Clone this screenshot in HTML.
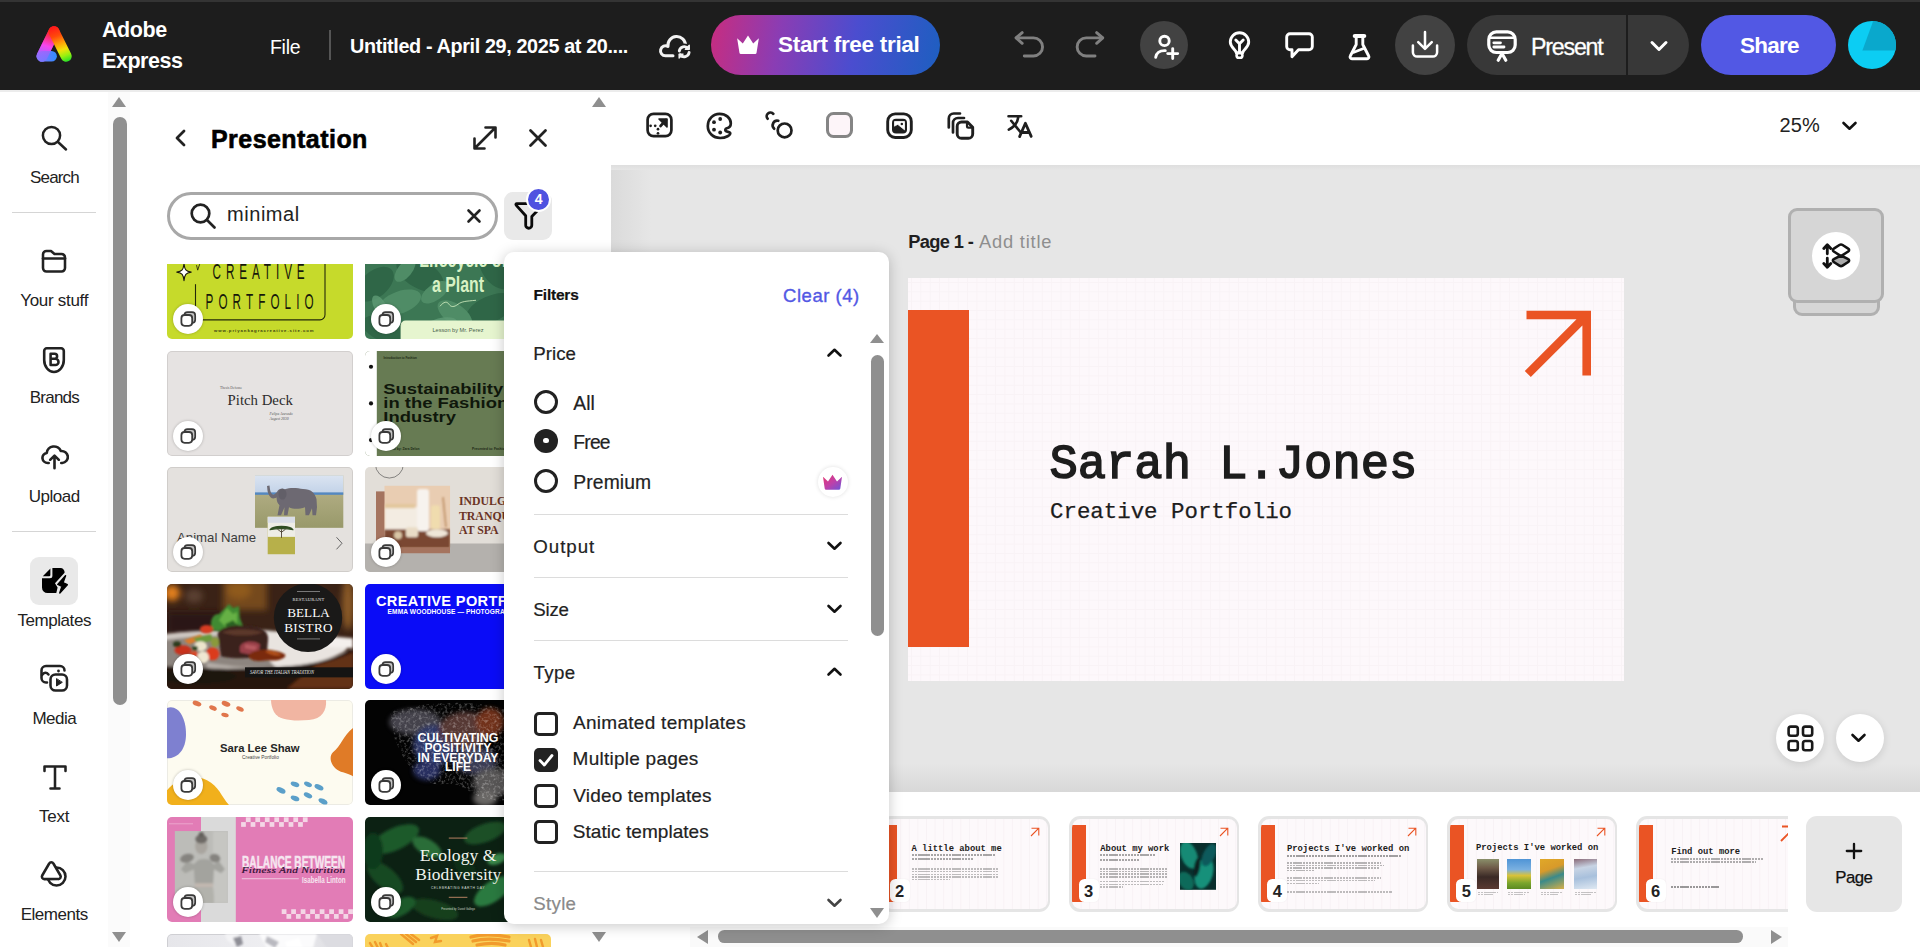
<!DOCTYPE html>
<html><head><meta charset="utf-8">
<style>
*{box-sizing:border-box;margin:0;padding:0}
html,body{width:1920px;height:947px;overflow:hidden;background:#fff;font-family:"Liberation Sans",sans-serif;color:#222}
.abs{position:absolute}
#top{position:absolute;left:0;top:0;width:1920px;height:90px;background:#1d1d1d;border-top:2px solid #343434}
#top .t{position:absolute;color:#fff;white-space:nowrap}
#rail{position:absolute;left:0;top:90px;width:108px;height:857px;background:#fff}
.ri{position:absolute;left:0;width:108px;text-align:center;font-size:16.5px;color:#222}
.ri svg{position:absolute}
.rdiv{position:absolute;left:12px;width:84px;height:1px;background:#d5d5d5}
#panel{position:absolute;left:130px;top:90px;width:481px;height:857px;background:#fff;overflow:hidden}
.tp{position:absolute;border-radius:5px;overflow:hidden}
.dup{position:absolute;left:6px;bottom:5px;width:30px;height:30px;border-radius:50%;background:#fff;box-shadow:0 0 3px rgba(0,0,0,.25)}
#ctool{position:absolute;left:611px;top:90px;width:1309px;height:75px;background:#fff}
#canvas{position:absolute;left:611px;top:165px;width:1309px;height:627px;overflow:hidden;background:#e6e6e6}
#strip{position:absolute;left:611px;top:792px;width:1309px;height:155px;background:#fff}
#pop{position:absolute;left:504px;top:252px;width:385px;height:672px;background:#fff;border-radius:10px;box-shadow:0 2px 14px rgba(0,0,0,.22);overflow:hidden}
#pop .h{position:absolute;left:29px;font-size:19px;color:#222;white-space:nowrap}
#pop .o{position:absolute;left:68px;font-size:19px;color:#222;white-space:nowrap}
#pop .dv{position:absolute;left:29px;width:314px;height:1px;background:#dcdcdc}
.rad{position:absolute;left:29px;width:24px;height:24px;border-radius:50%;border:2.5px solid #222;background:#fff}
.chk{position:absolute;left:29px;width:24px;height:24px;border-radius:5px;border:2.5px solid #222;background:#fff}
.sb{background:#8f8f8f;border-radius:7px;position:absolute}
.tri{position:absolute;width:0;height:0}
</style></head><body>

<!-- TOPBAR -->
<div id="top">
<!-- logo -->
<svg class="abs" style="left:34px;top:20px" width="40" height="42" viewBox="0 0 40 42">
<defs>
<linearGradient id="lgL" gradientUnits="userSpaceOnUse" x1="20" y1="5" x2="8" y2="40"><stop offset="0" stop-color="#ff1a1a"/><stop offset="0.25" stop-color="#ff2a55"/><stop offset="0.55" stop-color="#f646f0"/><stop offset="0.8" stop-color="#a862ff"/><stop offset="1" stop-color="#7a78ff"/></linearGradient>
<linearGradient id="lgR" gradientUnits="userSpaceOnUse" x1="20" y1="5" x2="33" y2="40"><stop offset="0" stop-color="#ff1a1a"/><stop offset="0.25" stop-color="#ff4a0a"/><stop offset="0.45" stop-color="#ff9a08"/><stop offset="0.65" stop-color="#f2e10a"/><stop offset="0.82" stop-color="#9af010"/><stop offset="1" stop-color="#1fe02a"/></linearGradient>
<linearGradient id="lgB" gradientUnits="userSpaceOnUse" x1="4" y1="0" x2="23" y2="0"><stop offset="0" stop-color="#8a74ff"/><stop offset="0.5" stop-color="#5a80ff"/><stop offset="1" stop-color="#2f8cff"/></linearGradient>
</defs>
<path d="M20 9.800 L8 34.200" fill="none" stroke="url(#lgL)" stroke-width="11" stroke-linecap="round"/>
<path d="M8 34.200 L17.600 34.200" fill="none" stroke="url(#lgB)" stroke-width="10.600" stroke-linecap="round"/>
<path d="M20 9.800 L8 34.200" fill="none" stroke="url(#lgL)" stroke-width="11" stroke-linecap="round" opacity="0.55"/>
<path d="M20 9.800 L32.200 34.200" fill="none" stroke="url(#lgR)" stroke-width="11" stroke-linecap="round"/>
</svg>
<div class="t" style="left:102px;top:12.500px;font-size:21.500px;font-weight:700;line-height:31px;letter-spacing:-0.45px">Adobe<br>Express</div>
<div class="t" style="left:270px;top:33.500px;font-size:19.500px;letter-spacing:-0.3px">File</div>
<div class="abs" style="left:329px;top:28px;width:2px;height:30px;background:#555"></div>
<div class="t" style="left:350px;top:32.500px;font-size:19.800px;font-weight:700;letter-spacing:-0.360px">Untitled - April 29, 2025 at 20....</div>
<!-- cloud sync -->
<svg class="abs" style="left:657px;top:28px" width="40" height="34" viewBox="0 0 40 34" fill="none" stroke="#f2f2f2" stroke-width="3" stroke-linecap="round" stroke-linejoin="round">
<path d="M16 25.800 H8.500 A5 5 0 1 1 10.970 16.450 A8.800 8.800 0 1 1 28.500 15.300"/>
<circle cx="27.200" cy="21.700" r="8.300" fill="#1d1d1d" stroke="none"/>
<path d="M22.300 21 A5 5 0 0 1 31.200 18.600" stroke-width="2.900"/><path d="M32.100 22.400 A5 5 0 0 1 23.200 24.800" stroke-width="2.900"/>
<path d="M32.300 15.300 V19.300 H28.300 Z M22.100 28.100 V24.100 H26.100 Z" fill="#f2f2f2" stroke-width="1.300"/>
</svg>
<!-- trial -->
<div class="abs" style="left:711px;top:13px;width:229px;height:60px;border-radius:30px;background:linear-gradient(100deg,#c22e84 3%,#8a3db4 30%,#4b4dcf 62%,#1d5fc0 100%)"></div>
<svg class="abs" style="left:734.500px;top:31.800px" width="26" height="20.800" viewBox="0 0 26 22" fill="#fff"><path d="M1.500 4.500 L7.500 10 L13 1.500 L18.500 10 L24.500 4.500 L22 20 a1.500 1.500 0 0 1-1.500 1.200 H5.500 A1.500 1.500 0 0 1 4 20 Z"/></svg>
<div class="t" style="left:778px;top:30px;font-size:22.5px;font-weight:700;letter-spacing:-0.3px">Start free trial</div>
<!-- undo/redo -->
<svg class="abs" style="left:1014px;top:28px" width="32" height="30" viewBox="0 0 32 30" fill="none" stroke="#808080" stroke-width="2.900" stroke-linecap="round" stroke-linejoin="round"><path d="M8.200 2.600 L2 7.900 L8.200 13.300"/><path d="M2.500 7.900 H19.500 a9.050 9.050 0 0 1 0 18.100 H10.300"/></svg>
<svg class="abs" style="left:1074px;top:28px" width="32" height="30" viewBox="0 0 32 30" fill="none" stroke="#808080" stroke-width="2.900" stroke-linecap="round" stroke-linejoin="round"><path d="M22.600 2.600 L28.800 7.900 L22.600 13.300"/><path d="M28.300 7.900 H12.200 a9.050 9.050 0 0 0 0 18.100 H21"/></svg>
<!-- add user -->
<div class="abs" style="left:1140px;top:19px;width:48px;height:48px;border-radius:50%;background:#424242"></div>
<svg class="abs" style="left:1150px;top:28px" width="30" height="32" viewBox="0 0 30 32" fill="none" stroke="#fff" stroke-width="2.900" stroke-linecap="round" stroke-linejoin="round"><circle cx="14.500" cy="10.900" r="4.700"/><path d="M5.700 27.200 C6.500 22.800 10 20.400 15.300 20.600"/><path d="M22.700 18.600 v10 M17.700 23.600 h10"/></svg>
<!-- bulb -->
<svg class="abs" style="left:1226px;top:28px" width="28" height="32" viewBox="0 0 28 32" fill="none" stroke="#fff" stroke-width="2.900" stroke-linecap="round" stroke-linejoin="round"><path d="M10.300 22.800 C10 19.500 4.300 17.500 4.300 12 a9.200 9.200 0 0 1 18.400 0 C22.700 17.500 17 19.500 16.700 22.800 Z"/><path d="M9.800 10 L13.500 13.800 L17.200 10 M13.500 13.800 V22"/><rect x="10.600" y="23" width="5.800" height="4.700" rx="2.300" stroke-width="2.600"/></svg>
<!-- comment -->
<svg class="abs" style="left:1283px;top:27px" width="34" height="32" viewBox="0 0 34 32" fill="none" stroke="#fff" stroke-width="2.900" stroke-linecap="round" stroke-linejoin="round"><path d="M7 4.800 H26 a3.300 3.300 0 0 1 3.300 3.300 V17.500 a3.300 3.300 0 0 1-3.300 3.300 H15.500 L9 27.800 V20.800 H7 a3.300 3.300 0 0 1-3.300-3.300 V8.100 A3.300 3.300 0 0 1 7 4.800 Z"/></svg>
<!-- flask -->
<svg class="abs" style="left:1346px;top:28px" width="28" height="32" viewBox="0 0 28 32" fill="none" stroke="#fff" stroke-width="2.900" stroke-linecap="round" stroke-linejoin="round"><path d="M8.800 6 H18.200" stroke-width="4.200"/><path d="M10.200 7 V14.500 L4.300 26 a1.800 1.800 0 0 0 1.600 2.700 H21.100 a1.800 1.800 0 0 0 1.600-2.700 L16.800 14.500 V7"/><path d="M7.300 22.500 L17.500 18.500" stroke-width="2.500"/></svg>
<!-- download -->
<div class="abs" style="left:1395px;top:13px;width:60px;height:60px;border-radius:50%;background:#424242"></div>
<svg class="abs" style="left:1409px;top:27px" width="32" height="31" viewBox="0 0 32 32" fill="none" stroke="#fff" stroke-width="2.600" stroke-linecap="round" stroke-linejoin="round"><path d="M16 3 v17 M9 13.500 l7 7 7-7"/><path d="M3.500 17 v7 a4.500 4.500 0 0 0 4.500 4.500 h16 a4.500 4.500 0 0 0 4.500-4.500 v-7"/></svg>
<!-- present -->
<div class="abs" style="left:1467px;top:13px;width:222px;height:60px;border-radius:30px;background:#383838"></div>
<div class="abs" style="left:1626px;top:13px;width:2px;height:60px;background:#1d1d1d"></div>
<svg class="abs" style="left:1485px;top:26px" width="34" height="36" viewBox="0 0 34 36" fill="none" stroke="#fff" stroke-width="3.200" stroke-linecap="round" stroke-linejoin="round"><rect x="3.800" y="3.900" width="26.400" height="20.600" rx="7.500"/><path d="M5 9.800 H29" stroke-width="2.400"/><path d="M8.800 14.800 H15.500 M8.800 19 H19" stroke-width="2.800"/><path d="M13.200 32.200 L17 25.500 L20.800 32.200" stroke-width="3.200"/></svg>
<div class="t" style="left:1531px;top:31.500px;font-size:23.200px;letter-spacing:-1.200px;-webkit-text-stroke:0.300px #fff">Present</div>
<svg class="abs" style="left:1649px;top:37px" width="20" height="14" viewBox="0 0 20 14" fill="none" stroke="#fff" stroke-width="3" stroke-linecap="round" stroke-linejoin="round"><path d="M3 3.500 l7 7 7-7"/></svg>
<!-- share -->
<div class="abs" style="left:1701px;top:13px;width:135px;height:60px;border-radius:30px;background:#5258e4"></div>
<div class="t" style="left:1740px;top:30.800px;font-size:22.500px;font-weight:700;letter-spacing:-0.750px">Share</div>
<!-- avatar -->
<div class="abs" style="left:1848px;top:19px;width:48px;height:48px;border-radius:50%;background:#0ccdf3;overflow:hidden"><svg width="48" height="48" viewBox="0 0 48 48" style="position:absolute;left:0;top:0"><path d="M25.200 0 L14.400 29.600 H48 V0 Z" fill="#0aa8cc"/></svg></div>
</div>

<div class="abs" style="left:0;top:90px;width:1920px;height:1.500px;background:#ececec;z-index:5"></div>
<!-- RAIL -->
<div id="rail">
<div class="abs" style="left:108px;top:0;width:23px;height:857px;background:#fbfbfb"></div>
<div class="ri" style="top:77.7px;font-size:17px;line-height:20px;letter-spacing:-0.86px;padding-left:0.86px">Search</div>
<div class="ri" style="top:200.7px;font-size:17px;line-height:20px;letter-spacing:-0.29px;padding-left:0.29px">Your stuff</div>
<div class="ri" style="top:298.3px;font-size:17px;line-height:20px;letter-spacing:-0.76px;padding-left:0.76px">Brands</div>
<div class="ri" style="top:396.7px;font-size:17px;line-height:20px;letter-spacing:-0.48px;padding-left:0.48px">Upload</div>
<div class="ri" style="top:521.0px;font-size:17px;line-height:20px;letter-spacing:-0.44px;padding-left:0.44px">Templates</div>
<div class="ri" style="top:618.7px;font-size:17px;line-height:20px;letter-spacing:-0.52px;padding-left:0.52px">Media</div>
<div class="ri" style="top:716.7px;font-size:17px;line-height:20px;letter-spacing:-0.24px;padding-left:0.24px">Text</div>
<div class="ri" style="top:814.7px;font-size:17px;line-height:20px;letter-spacing:-0.46px;padding-left:0.46px">Elements</div>
<div class="rdiv" style="top:122px"></div><div class="rdiv" style="top:441px"></div>
<svg class="abs" style="left:40px;top:34px" width="28" height="28" viewBox="0 0 28 28" fill="none" stroke="#222" stroke-width="2.550" stroke-linecap="round" stroke-linejoin="round"><circle cx="11.500" cy="11.500" r="8.600" stroke-width="2.500"/><path d="M18 18 L26 25.500" stroke-width="2.500"/></svg>
<svg class="abs" style="left:40px;top:158px" width="28" height="26" viewBox="0 0 28 26" fill="none" stroke="#222" stroke-width="2.550" stroke-linecap="round" stroke-linejoin="round"><path d="M3 10 V6.500 a3.500 3.500 0 0 1 3.500-3.500 h4.500 l3.500 3 h7 a3.500 3.500 0 0 1 3.500 3.500 V20 a3.500 3.500 0 0 1-3.500 3.500 h-15 A3.500 3.500 0 0 1 3 20 Z"/><path d="M3 10.500 h22"/></svg>
<svg class="abs" style="left:41px;top:255px" width="26" height="30" viewBox="0 0 26 30" fill="none" stroke="#222" stroke-width="2.600" stroke-linecap="round" stroke-linejoin="round"><path d="M5.800 3.300 H20.200 a2.600 2.600 0 0 1 2.600 2.600 V15 a9.800 12 0 0 1-19.600 0 V5.900 a2.600 2.600 0 0 1 2.600-2.600 Z"/><path d="M9.600 8.800 V20 H14.400 a3.100 3.100 0 0 0 0-6.200 H9.600 M9.600 13.800 H13.600 a2.500 2.500 0 0 0 0-5 H9.600" stroke-width="2.550"/></svg>
<svg class="abs" style="left:40px;top:354px" width="29" height="26" preserveAspectRatio="none" viewBox="0 0 30 28" fill="none" stroke="#222" stroke-width="2.700" stroke-linecap="round" stroke-linejoin="round"><path d="M9 20.500 H8 a5.500 5.500 0 0 1-1-10.900 A7.500 7.500 0 0 1 21.500 7.500 a6.500 6.500 0 0 1 1.500 13 h-1"/><path d="M15 26 V13 M10.500 17 l4.500-4.500 4.500 4.500"/></svg>
<svg class="abs" style="left:30px;top:467px" width="48" height="48" viewBox="0 0 48 48"><rect width="48" height="48" rx="9" fill="#e9e9e9"/>
<path d="M12.800 19.300 L20.400 11.400 V18 a1.300 1.300 0 0 1-1.300 1.300 Z" fill="#000"/>
<path d="M22.400 11.100 H30.500 a4.200 4.200 0 0 1 4.100 4.600 L25 26.300 L27.600 30.600 L26.300 36.100 H17.500 A5.500 5.500 0 0 1 12 30.600 V21.300 H19.900 A2.500 2.500 0 0 0 22.400 18.800 Z" fill="#000"/>
<path d="M35.500 18.800 L27.800 27.400 L32 29.200 L29.800 36 L37.300 27.700 L33 25.800 Z" fill="#000" stroke="#000" stroke-width="1.500" stroke-linejoin="round"/>
</svg>
<svg class="abs" style="left:39px;top:573px" width="30" height="30" viewBox="0 0 30 30" fill="none" stroke="#222" stroke-width="2.550" stroke-linecap="round" stroke-linejoin="round"><path d="M8 19.500 H7 a4.500 4.500 0 0 1-4.500-4.500 V7.500 A4.500 4.500 0 0 1 7 3 h14 a4.500 4.500 0 0 1 4.500 4.500"/><path d="M3 12 c2-3 4.500-3 6.500-0.500"/><circle cx="19.500" cy="8" r="1.400" fill="#222" stroke="none"/><rect x="11.500" y="11.500" width="16.500" height="16" rx="5"/><path d="M17.500 16 v7 l5.500-3.500 Z" fill="#222" stroke-width="1"/></svg>
<svg class="abs" style="left:42px;top:674px" width="26" height="27" viewBox="0 0 26 27" fill="none" stroke="#222" stroke-width="2.550" stroke-linecap="round" stroke-linejoin="round"><path d="M2.500 7 V2.500 h21 V7 M13 2.500 v22 M8.500 24.500 h9"/></svg>
<svg class="abs" style="left:39px;top:769px" width="30" height="30" viewBox="0 0 30 30" fill="none" stroke="#222" stroke-width="2.550" stroke-linecap="round" stroke-linejoin="round"><circle cx="17.500" cy="17.500" r="9"/><path d="M10.200 4.500 a2.400 2.400 0 0 1 4.200 0 l7 12 a2.400 2.400 0 0 1-2.100 3.600 H5.300 a2.400 2.400 0 0 1-2.100-3.600 Z" fill="#fff"/></svg>
<div class="tri" style="left:112px;top:7px;border-left:7.500px solid transparent;border-right:7.500px solid transparent;border-bottom:10px solid #8f8f8f"></div>
<div class="sb" style="left:113px;top:27px;width:13.500px;height:588px"></div>
<div class="tri" style="left:112px;top:842px;border-left:7.500px solid transparent;border-right:7.500px solid transparent;border-top:10px solid #8f8f8f"></div>
</div>

<!-- PANEL -->
<div id="panel">
<svg class="abs" style="left:43px;top:38px" width="14" height="20" viewBox="0 0 14 20" fill="none" stroke="#222" stroke-width="2.800" stroke-linecap="round" stroke-linejoin="round"><path d="M11 3 L4 10 L11 17"/></svg>
<div class="abs" style="left:81px;top:33.500px;font-size:25px;font-weight:700;letter-spacing:0.45px;color:#000;-webkit-text-stroke:0.600px #000;white-space:nowrap;line-height:30px">Presentation</div>
<svg class="abs" style="left:341px;top:34px" width="28" height="28" viewBox="0 0 28 28" fill="none" stroke="#222" stroke-width="2.600" stroke-linecap="round" stroke-linejoin="round"><path d="M4 24 L24 4 M14.500 3.500 H24.500 V13.500 M3.500 14.500 V24.500 H13.500"/></svg>
<svg class="abs" style="left:398px;top:38px" width="20" height="20" viewBox="0 0 20 20" fill="none" stroke="#222" stroke-width="2.800" stroke-linecap="round"><path d="M2.500 2.500 L17.500 17.500 M17.500 2.500 L2.500 17.500"/></svg>
<div class="abs" style="left:37px;top:102px;width:331px;height:48px;border-radius:24px;border:3px solid #a8a8a8;background:#fff"></div>
<svg class="abs" style="left:59px;top:112px" width="28" height="28" viewBox="0 0 28 28" fill="none" stroke="#222" stroke-width="2.700" stroke-linecap="round"><circle cx="11.500" cy="11.500" r="8.800"/><path d="M18 18 L25.500 25.500"/></svg>
<div class="abs" style="left:97px;top:112px;font-size:20px;line-height:24px;letter-spacing:0.550px;color:#222">minimal</div>
<svg class="abs" style="left:336px;top:118px" width="16" height="16" viewBox="0 0 16 16" fill="none" stroke="#222" stroke-width="2.600" stroke-linecap="round"><path d="M2.500 2.500 L13.500 13.500 M13.500 2.500 L2.500 13.500"/></svg>
<div class="abs" style="left:374px;top:102px;width:48px;height:48px;border-radius:9px;background:#e9e9e9"></div>
<svg class="abs" style="left:383px;top:110px" width="30" height="32" viewBox="0 0 30 32" fill="none" stroke="#0a0a0a" stroke-width="2.800" stroke-linecap="round" stroke-linejoin="round"><path d="M24 3.600 H3.800 a0.900 0.900 0 0 0-0.700 1.500 L12.700 15.800 V25.200 a3.050 3.050 0 0 0 6.100 0 V16.400 L27 8"/></svg>
<div class="abs" style="left:396px;top:97px;width:25.400px;height:25.400px;border-radius:50%;background:#4f52e0;border:2.200px solid #fff;color:#fff;font-size:14px;font-weight:700;text-align:center;line-height:21px">4</div>
<!--TPL_START--><div class="abs" style="left:0;top:174px;width:480px;height:683px;overflow:hidden"><div class="tp" style="left:37px;top:-30px;width:186px;height:105px;"><svg width="186" height="105" preserveAspectRatio="none" viewBox="0 0 186 104.6" style="position:absolute;left:0;top:0;display:block"><rect width="186" height="104.600" fill="#c6da2b"/>
<rect x="28.500" y="12" width="129.500" height="73.500" rx="5" fill="none" stroke="#23280a" stroke-width="1.100"/>
<rect x="10" y="28" width="24" height="22" fill="#c6da2b"/>
<path d="M17 29.500 C17.700 35.800 18.800 37.200 24.200 38 C18.800 38.800 17.700 40.200 17 46.500 C16.300 40.200 15.200 38.800 9.800 38 C15.200 37.200 16.300 35.800 17 29.500 Z" fill="#fff" stroke="#1a1a0a" stroke-width="1.100" stroke-linejoin="round"/>
<path d="M29.500 31 l1.200 5 l2-6" fill="none" stroke="#1a1a0a" stroke-width="0.800"/>
<g transform="translate(45.500,44.500) scale(0.520,1)"><text x="0" y="0" font-size="22.500" letter-spacing="9.500" fill="#16180a" font-family="Liberation Sans, sans-serif">CREATIVE</text></g>
<g transform="translate(38.500,74.700) scale(0.520,1)"><text x="0" y="0" font-size="22.500" letter-spacing="9.800" fill="#16180a" font-family="Liberation Sans, sans-serif">PORTFOLIO</text></g>
<text x="47" y="97.800" font-size="4.300" font-weight="700" letter-spacing="0.950" fill="#3a4010" font-family="Liberation Sans, sans-serif">www.priyankagracreative.site.com</text></svg><div class="dup"><svg width="30" height="30" viewBox="0 0 30 30" style="position:absolute;left:0;top:0"><rect x="11.400" y="8.200" width="10.800" height="10.800" rx="3.200" fill="#c4c4c4" stroke="#3a3a3a" stroke-width="1.700"/><rect x="8.400" y="11" width="10.800" height="10.800" rx="3.200" fill="#fff" stroke="#3a3a3a" stroke-width="1.800"/></svg></div></div>
<div class="tp" style="left:235px;top:-30px;width:186px;height:105px;"><svg width="186" height="105" preserveAspectRatio="none" viewBox="0 0 186 104.6" style="position:absolute;left:0;top:0;display:block"><defs><radialGradient id="lf1" cx="0.3" cy="0.3"><stop offset="0" stop-color="#5b9a70"/><stop offset="1" stop-color="#3a7352"/></radialGradient></defs>
<rect width="186" height="104.600" fill="#3c7754"/>
<g fill="#2f6647"><ellipse cx="10" cy="50" rx="22" ry="13" transform="rotate(-40 10 50)"/><ellipse cx="55" cy="40" rx="26" ry="14" transform="rotate(30 55 40)"/><ellipse cx="125" cy="75" rx="26" ry="13" transform="rotate(-25 125 75)"/><ellipse cx="20" cy="95" rx="24" ry="12" transform="rotate(20 20 95)"/><ellipse cx="130" cy="38" rx="20" ry="11" transform="rotate(50 130 38)"/></g>
<g fill="#4f8c66"><ellipse cx="35" cy="68" rx="22" ry="11" transform="rotate(-20 35 68)"/><ellipse cx="90" cy="80" rx="20" ry="10" transform="rotate(35 90 80)"/><ellipse cx="40" cy="36" rx="14" ry="7" transform="rotate(-50 40 36)"/><ellipse cx="70" cy="58" rx="16" ry="8" transform="rotate(-35 70 58)"/></g>
<g fill="#5f9c76" opacity="0.800"><ellipse cx="75" cy="92" rx="18" ry="8" transform="rotate(-15 75 92)"/><ellipse cx="15" cy="72" rx="12" ry="6" transform="rotate(60 15 72)"/></g>
<g transform="translate(93,57.400) scale(0.740,1)"><text x="0" y="0" text-anchor="middle" font-size="21.500" font-weight="700" fill="#d8f2c4" font-family="Liberation Sans, sans-serif">a Plant</text></g>
<g transform="translate(98,33.200) scale(0.740,1)"><text x="0" y="0" text-anchor="middle" font-size="21.500" font-weight="700" fill="#d8f2c4" font-family="Liberation Sans, sans-serif">Lifecycle of</text></g>
<path d="M75 72 c4-5 7-5 9-2 s5 3 9 0 s8-3 18-4" fill="none" stroke="#d8f2c4" stroke-width="0.800"/>
<path d="M35.600 104.600 V91.200 a5 5 0 0 1 5-5 H186 V104.600 Z" fill="#e6f5cf"/>
<text x="93" y="97.500" text-anchor="middle" font-size="5.600" fill="#46604a" font-family="Liberation Sans, sans-serif">Lesson by Mr. Perez</text></svg><div class="dup"><svg width="30" height="30" viewBox="0 0 30 30" style="position:absolute;left:0;top:0"><rect x="11.400" y="8.200" width="10.800" height="10.800" rx="3.200" fill="#c4c4c4" stroke="#3a3a3a" stroke-width="1.700"/><rect x="8.400" y="11" width="10.800" height="10.800" rx="3.200" fill="#fff" stroke="#3a3a3a" stroke-width="1.800"/></svg></div></div>
<div class="tp" style="left:37px;top:87px;width:186px;height:105px;"><svg width="186" height="105" preserveAspectRatio="none" viewBox="0 0 186 104.6" style="position:absolute;left:0;top:0;display:block"><rect width="186" height="104.600" fill="#e6e3e2"/><rect x="0.500" y="0.500" width="185" height="103.600" rx="4.500" fill="none" stroke="#d2cfce"/>
<text x="60.600" y="53.800" font-size="14.800" fill="#2c2c2c" font-family="Liberation Serif, serif">Pitch Deck</text>
<text x="53" y="37.500" font-size="3.600" fill="#555" font-family="Liberation Serif, serif">Thesis Defense</text>
<text x="102.500" y="63.500" font-size="3.800" font-style="italic" fill="#555" font-family="Liberation Serif, serif">Felipe Azevedo</text>
<text x="102.500" y="68.600" font-size="3.800" font-style="italic" fill="#555" font-family="Liberation Serif, serif">August 2030</text></svg><div class="dup"><svg width="30" height="30" viewBox="0 0 30 30" style="position:absolute;left:0;top:0"><rect x="11.400" y="8.200" width="10.800" height="10.800" rx="3.200" fill="#c4c4c4" stroke="#3a3a3a" stroke-width="1.700"/><rect x="8.400" y="11" width="10.800" height="10.800" rx="3.200" fill="#fff" stroke="#3a3a3a" stroke-width="1.800"/></svg></div></div>
<div class="tp" style="left:235px;top:87px;width:186px;height:105px;border-radius:5px 0 0 5px;"><svg width="186" height="105" preserveAspectRatio="none" viewBox="0 0 186 104.6" style="position:absolute;left:0;top:0;display:block"><rect width="186" height="104.600" fill="#677b53"/><rect width="11.800" height="104.600" fill="#fff"/>
<circle cx="6" cy="15.700" r="2.100" fill="#111"/><circle cx="6" cy="52.200" r="2.100" fill="#111"/><circle cx="6" cy="88.700" r="2.100" fill="#111"/>
<text x="18.500" y="8" font-size="3" font-weight="700" fill="#1d2a16" font-family="Liberation Sans, sans-serif">Introduction to Fashion</text>
<g transform="translate(18.300,42.800) scale(1.290,1)" font-size="14.300" font-weight="700" fill="#0f170b" font-family="Liberation Sans, sans-serif"><text x="0" y="0">Sustainability</text><text x="0" y="14.300">in the Fashion</text><text x="0" y="28.100">Industry</text></g>
<text x="18.500" y="98.800" font-size="3.300" font-weight="700" fill="#1d2a16" font-family="Liberation Sans, sans-serif">Created by: Zara Delon</text>
<text x="107" y="98.800" font-size="3.300" font-weight="700" fill="#1d2a16" font-family="Liberation Sans, sans-serif">Presented to: Fashion</text></svg><div class="dup"><svg width="30" height="30" viewBox="0 0 30 30" style="position:absolute;left:0;top:0"><rect x="11.400" y="8.200" width="10.800" height="10.800" rx="3.200" fill="#c4c4c4" stroke="#3a3a3a" stroke-width="1.700"/><rect x="8.400" y="11" width="10.800" height="10.800" rx="3.200" fill="#fff" stroke="#3a3a3a" stroke-width="1.800"/></svg></div></div>
<div class="tp" style="left:37px;top:203px;width:186px;height:105px;"><svg width="186" height="105" preserveAspectRatio="none" viewBox="0 0 186 104.6" style="position:absolute;left:0;top:0;display:block"><defs><filter id="b1"><feGaussianBlur stdDeviation="0.450"/></filter><linearGradient id="sky" x1="0" y1="0" x2="0" y2="1"><stop offset="0" stop-color="#dbe4f1"/><stop offset="1" stop-color="#c3d3e8"/></linearGradient><linearGradient id="fld" x1="0" y1="0" x2="0" y2="1"><stop offset="0" stop-color="#bdb890"/><stop offset="0.500" stop-color="#aaa77c"/><stop offset="1" stop-color="#98996a"/></linearGradient></defs>
<rect width="186" height="104.600" fill="#e4e1de"/><rect x="0.500" y="0.500" width="185" height="103.600" rx="4.500" fill="none" stroke="#d0cdca"/>
<rect x="88" y="8.300" width="88.300" height="52.300" fill="url(#fld)"/>
<rect x="88" y="8.300" width="88.300" height="17.500" fill="url(#sky)"/><rect x="88" y="25.300" width="88.300" height="2.400" fill="#5388c2"/>
<g fill="#6d6972" filter="url(#b1)"><path d="M112 26 C116 20 128 20 136 22 C144 22 148 26 149.500 32 L150 40 L149 48 L145.500 48 L145 41 L142 48 L138.500 48 L138 40 C132 42 126 42 122 40 L120.500 48 L117 48 L117.500 40 L114 48 L110.500 48 L112.500 38 C110 36 109 32 110 29 Z"/><path d="M110.500 30 C106 33 103 31 101.500 27 C100 24 100.500 21 100 19 L102.500 18.500 C103 22 103 25 105 27 C106.500 28.500 108 27 110 25 C111 21.500 115 20.500 118 23 L116 33 Z"/><ellipse cx="115.500" cy="27" rx="4" ry="5.500" fill="#625e68"/></g>
<rect x="100.700" y="49.600" width="27.300" height="37.300" fill="#b7b04a"/><rect x="100.700" y="49.600" width="27.300" height="20" fill="#eeede6"/><rect x="100.700" y="49.600" width="27.300" height="6" fill="#d9dde6"/>
<path d="M103 62.500 C106 58 123 58 126 62.500 C120 61 109 61 103 62.500 Z" fill="#2f4d22" stroke="#2f4d22" stroke-width="1.200" stroke-linejoin="round"/><path d="M114.500 62 v8.500 M114.500 65 l-4-3 M114.500 65 l4-3" stroke="#3a3020" stroke-width="0.800" fill="none"/>
<text x="10" y="75" font-size="13.200" fill="#3c3c3c" font-family="Liberation Sans, sans-serif">Animal Name</text>
<path d="M169.500 70 l5.500 6 l-5.500 6" fill="none" stroke="#555" stroke-width="0.900"/></svg><div class="dup"><svg width="30" height="30" viewBox="0 0 30 30" style="position:absolute;left:0;top:0"><rect x="11.400" y="8.200" width="10.800" height="10.800" rx="3.200" fill="#c4c4c4" stroke="#3a3a3a" stroke-width="1.700"/><rect x="8.400" y="11" width="10.800" height="10.800" rx="3.200" fill="#fff" stroke="#3a3a3a" stroke-width="1.800"/></svg></div></div>
<div class="tp" style="left:235px;top:203px;width:186px;height:105px;border-radius:5px 0 0 5px;"><svg width="186" height="105" preserveAspectRatio="none" viewBox="0 0 186 104.6" style="position:absolute;left:0;top:0;display:block"><defs><filter id="b2"><feGaussianBlur stdDeviation="1.200"/></filter><clipPath id="spc"><rect x="19.300" y="18.500" width="65.900" height="61.600"/></clipPath></defs>
<rect width="186" height="104.600" fill="#e2ded8"/><rect y="76.200" width="186" height="28.400" fill="#b4b1ad"/>
<circle cx="24.400" cy="-3" r="14" fill="none" stroke="#444" stroke-width="0.600"/>
<rect x="11" y="24.300" width="74" height="61.600" fill="#a5745f"/>
<g clip-path="url(#spc)"><rect x="19.300" y="18.500" width="65.900" height="61.600" fill="#e9cdb2"/>
<g filter="url(#b2)"><rect x="19.300" y="62" width="66" height="19" fill="#7a4632"/><rect x="20" y="40" width="34" height="22" fill="#f3ece2"/><rect x="52" y="22" width="12" height="42" rx="3" fill="#f7f3ee"/><rect x="66" y="38" width="9" height="24" rx="2" fill="#f0dcae"/><ellipse cx="72" cy="66" rx="11" ry="4" fill="#efe6d8"/><rect x="41" y="60" width="12" height="10" rx="2" fill="#e9dcc6"/><circle cx="33" cy="68" r="4" fill="#d9c6a6"/><rect x="20" y="37" width="30" height="4" fill="#e3c79c"/><path d="M78 30 l3 30" stroke="#b98a5e" stroke-width="1.500"/></g></g>
<g font-size="11.800" font-weight="700" fill="#6b3425" font-family="Liberation Serif, serif"><text x="94" y="38.200">INDULGE IN</text><text x="94" y="52.600">TRANQUILITY</text><text x="94" y="66.600">AT SPA</text></g></svg><div class="dup"><svg width="30" height="30" viewBox="0 0 30 30" style="position:absolute;left:0;top:0"><rect x="11.400" y="8.200" width="10.800" height="10.800" rx="3.200" fill="#c4c4c4" stroke="#3a3a3a" stroke-width="1.700"/><rect x="8.400" y="11" width="10.800" height="10.800" rx="3.200" fill="#fff" stroke="#3a3a3a" stroke-width="1.800"/></svg></div></div>
<div class="tp" style="left:37px;top:320px;width:186px;height:105px;"><svg width="186" height="105" preserveAspectRatio="none" viewBox="0 0 186 104.6" style="position:absolute;left:0;top:0;display:block"><defs><filter id="b3" x="-20%" y="-20%" width="140%" height="140%"><feGaussianBlur stdDeviation="3"/></filter><filter id="b3s" x="-10%" y="-10%" width="120%" height="120%"><feGaussianBlur stdDeviation="0.800"/></filter><filter id="b3m" x="-10%" y="-10%" width="120%" height="120%"><feGaussianBlur stdDeviation="1.500"/></filter></defs>
<rect width="186" height="104.600" fill="#3a2216"/>
<g filter="url(#b3)"><ellipse cx="5" cy="9" rx="8" ry="8" fill="#e07f1a"/><ellipse cx="27" cy="12" rx="9" ry="7" fill="#5a4030"/><rect x="56" y="-4" width="44" height="30" fill="#75481c"/><ellipse cx="72" cy="6" rx="12" ry="9" fill="#8f5a1c"/><ellipse cx="181" cy="20" rx="6" ry="26" fill="#8a5a26"/><rect x="0" y="28" width="60" height="22" fill="#2a1912"/></g>
<g filter="url(#b3m)"><path d="M-4 50 C30 46 70 44 104 46 L178 60 C184 62 178 68 172 70 C160 76 140 82 110 84 C70 86 30 84 -4 82 Z" fill="#8d857f"/><path d="M-4 50 C20 47 40 46 52 46 L50 52 C30 52 10 54 -4 56 Z" fill="#cfc8c2"/><path d="M96 46 L178 60 C184 62 178 68 172 70 C160 76 140 82 112 84 C100 80 96 60 96 46 Z" fill="#e9e4e0"/><path d="M104 47 L186 54 V64 L150 62 Z" fill="#f4f0ed"/><path d="M40 78 C70 84 110 86 140 80 L138 84 C110 88 70 88 40 84 Z" fill="#b5aea8"/><path d="M-4 82 C40 86 110 86 150 78 C166 74 178 70 186 66 V106 H-4 Z" fill="#27150f"/><path d="M150 80 C166 76 178 72 186 68 V104 H120 Z" fill="#643012"/><ellipse cx="30" cy="92" rx="40" ry="8" fill="#1f120d"/></g>
<g filter="url(#b3s)"><path d="M45 46 C42 36 46 30 52 30 L62 20 L66 24 L72 22 L73 34 L76 42 L70 48 Z" fill="#3f8a30"/><path d="M52 36 L60 24 L66 30 L70 28 L70 40 L60 44 Z" fill="#66b044"/><path d="M58 40 L66 36 L74 44 L62 48 Z" fill="#2c6324"/>
<path d="M51 50 C52 42 70 40 84 42 C96 43 102 48 101 56 L100 68 C96 74 70 76 54 72 Z" fill="#3a201b"/><path d="M55 48 C62 44 84 44 96 48 C88 52 66 53 55 48 Z" fill="#5b372b"/><path d="M73 62 C76 56 88 56 93 60 L92 68 C86 71 78 70 73 68 Z" fill="#9a4049"/><path d="M78 60 L90 62 L88 66 L78 64 Z" fill="#b85a60"/>
<path d="M82 70 C88 64 108 64 118 70 C120 74 112 77 100 76 C90 78 80 76 82 70 Z" fill="#7a2b0f"/><path d="M98 67 C104 66 112 68 114 71 C108 72 102 70 98 67 Z" fill="#b5521c"/>
<ellipse cx="39.500" cy="45" rx="6.500" ry="4.200" fill="#d63c22"/><ellipse cx="45.500" cy="69.500" rx="6.800" ry="6.500" fill="#db3a1e"/><ellipse cx="16" cy="66" rx="8.500" ry="5" fill="#c8321c"/><ellipse cx="27" cy="70" rx="4" ry="3" fill="#e04a26"/>
<path d="M17 56 L34 50 L36 55 L22 60 Z" fill="#dc7a2c"/><path d="M26 54 L44 50 L46 56 L32 60 Z" fill="#6a9a3a"/>
<ellipse cx="33.500" cy="62" rx="6.500" ry="5" fill="#ece4cc"/><ellipse cx="36" cy="73" rx="6" ry="6" fill="#efe7d2"/><ellipse cx="28" cy="64" rx="3" ry="2.500" fill="#2f4a24"/><ellipse cx="10" cy="60" rx="4" ry="3" fill="#2a3a1c"/><ellipse cx="48" cy="58" rx="4" ry="5" fill="#8a9a3a"/></g>
<circle cx="141" cy="33.600" r="34.200" fill="#1a1918"/>
<path d="M130 7.500 h23 M130 54.700 h23" stroke="#ddd" stroke-width="0.500"/>
<text x="141.500" y="16.800" text-anchor="middle" font-size="4.600" fill="#e8e8e8" letter-spacing="0.200" font-family="Liberation Serif, serif">RESTAURANT</text>
<text x="141.500" y="33" text-anchor="middle" font-size="13.200" fill="#fff" font-family="Liberation Serif, serif">BELLA</text>
<text x="141.500" y="47.900" text-anchor="middle" font-size="13.200" fill="#fff" letter-spacing="0.300" font-family="Liberation Serif, serif">BISTRO</text>
<rect x="78" y="83" width="108" height="10" fill="#151413"/>
<g transform="translate(83,90) scale(0.800,1)"><text x="0" y="0" font-size="5.600" font-style="italic" fill="#e8e8e8" font-family="Liberation Serif, serif">SAVOR THE ITALIAN TRADITION</text></g></svg><div class="dup"><svg width="30" height="30" viewBox="0 0 30 30" style="position:absolute;left:0;top:0"><rect x="11.400" y="8.200" width="10.800" height="10.800" rx="3.200" fill="#c4c4c4" stroke="#3a3a3a" stroke-width="1.700"/><rect x="8.400" y="11" width="10.800" height="10.800" rx="3.200" fill="#fff" stroke="#3a3a3a" stroke-width="1.800"/></svg></div></div>
<div class="tp" style="left:235px;top:320px;width:186px;height:105px;border-radius:5px 0 0 5px;"><svg width="186" height="105" preserveAspectRatio="none" viewBox="0 0 186 104.6" style="position:absolute;left:0;top:0;display:block"><rect width="186" height="104.600" fill="#0a0cf7"/>
<text x="11" y="21.800" font-size="14.600" font-weight="700" letter-spacing="0.350" fill="#fff" font-family="Liberation Sans, sans-serif">CREATIVE PORTFOLIO</text>
<text x="22.600" y="29.900" font-size="6.600" font-weight="700" letter-spacing="0.100" fill="#fff" font-family="Liberation Sans, sans-serif">EMMA WOODHOUSE — PHOTOGRAPHER</text></svg><div class="dup"><svg width="30" height="30" viewBox="0 0 30 30" style="position:absolute;left:0;top:0"><rect x="11.400" y="8.200" width="10.800" height="10.800" rx="3.200" fill="#c4c4c4" stroke="#3a3a3a" stroke-width="1.700"/><rect x="8.400" y="11" width="10.800" height="10.800" rx="3.200" fill="#fff" stroke="#3a3a3a" stroke-width="1.800"/></svg></div></div>
<div class="tp" style="left:37px;top:436px;width:186px;height:105px;"><svg width="186" height="105" preserveAspectRatio="none" viewBox="0 0 186 104.6" style="position:absolute;left:0;top:0;display:block"><rect width="186" height="104.600" fill="#fdfbf0"/><rect x="0.500" y="0.500" width="185" height="103.600" rx="4.500" fill="none" stroke="#ecebe4"/>
<path d="M0 8 C10 4 19 16 19 34 C19 48 12 58 0 58 Z" fill="#7e80d0"/>
<g fill="#e0764c"><ellipse cx="30" cy="3.500" rx="4.500" ry="2.500" transform="rotate(20 30 3.500)"/><ellipse cx="46" cy="8" rx="4" ry="2.300" transform="rotate(25 46 8)"/><ellipse cx="59" cy="3.800" rx="4.500" ry="2.500" transform="rotate(20 59 3.800)"/><ellipse cx="58" cy="15" rx="3.800" ry="2" transform="rotate(15 58 15)"/><ellipse cx="73" cy="9" rx="4" ry="2.200" transform="rotate(25 73 9)"/></g>
<path d="M104 0 H159 C160 10 155 19 142 20 C128 21 112 21 107 12 C105 8 104 4 104 0 Z" fill="#f1b5a2"/>
<path d="M186 28 C176 36 174 46 166 52 C160 58 166 70 176 72 C180 73 184 75 186 76 Z" fill="#e07b27"/>
<path d="M0 90 C8 80 24 72 40 80 C52 86 54 96 62 104.600 H0 Z" fill="#f1b01c"/>
<g fill="#5b9fc9"><ellipse cx="114" cy="90" rx="4.800" ry="2.600" transform="rotate(25 114 90)"/><ellipse cx="128" cy="84" rx="4.500" ry="2.400" transform="rotate(20 128 84)"/><ellipse cx="141" cy="84" rx="4.200" ry="2.300" transform="rotate(25 141 84)"/><ellipse cx="152" cy="87" rx="4.800" ry="2.500" transform="rotate(25 152 87)"/><ellipse cx="128" cy="98" rx="4.500" ry="2.400" transform="rotate(20 128 98)"/><ellipse cx="141" cy="95" rx="4.500" ry="2.400" transform="rotate(25 141 95)"/><ellipse cx="156" cy="101" rx="4.800" ry="2.500" transform="rotate(25 156 101)"/></g>
<text x="92.800" y="52.300" text-anchor="middle" font-size="11.300" font-weight="700" fill="#262626" font-family="Liberation Sans, sans-serif">Sara Lee Shaw</text>
<text x="93.500" y="59" text-anchor="middle" font-size="4.800" fill="#444" font-family="Liberation Sans, sans-serif">Creative Portfolio</text></svg><div class="dup"><svg width="30" height="30" viewBox="0 0 30 30" style="position:absolute;left:0;top:0"><rect x="11.400" y="8.200" width="10.800" height="10.800" rx="3.200" fill="#c4c4c4" stroke="#3a3a3a" stroke-width="1.700"/><rect x="8.400" y="11" width="10.800" height="10.800" rx="3.200" fill="#fff" stroke="#3a3a3a" stroke-width="1.800"/></svg></div></div>
<div class="tp" style="left:235px;top:436px;width:186px;height:105px;border-radius:5px 0 0 5px;"><svg width="186" height="105" preserveAspectRatio="none" viewBox="0 0 186 104.6" style="position:absolute;left:0;top:0;display:block"><defs><filter id="b4" x="-30%" y="-30%" width="160%" height="160%"><feGaussianBlur stdDeviation="2.500"/></filter><filter id="n4"><feTurbulence type="fractalNoise" baseFrequency="0.350" numOctaves="2" seed="3"/><feColorMatrix values="0 0 0 0 1  0 0 0 0 1  0 0 0 0 1  0 0 0 1.600 -0.750"/><feComposite in2="SourceGraphic" operator="in"/></filter></defs>
<rect width="186" height="104.600" fill="#030303"/>
<g filter="url(#b4)" opacity="0.620"><ellipse cx="50" cy="22" rx="26" ry="13" fill="#6d6a78"/><ellipse cx="70" cy="45" rx="22" ry="20" fill="#4a5aa8"/><ellipse cx="100" cy="30" rx="26" ry="18" fill="#8a5a52"/><ellipse cx="125" cy="22" rx="14" ry="14" fill="#b5502a"/><ellipse cx="62" cy="70" rx="14" ry="10" fill="#3f4b9a"/><ellipse cx="110" cy="60" rx="22" ry="14" fill="#5d5f86"/><ellipse cx="128" cy="82" rx="20" ry="14" fill="#8d8a8a"/><ellipse cx="120" cy="98" rx="12" ry="8" fill="#a9a5a2"/></g>
<g filter="url(#n4)" opacity="0.550"><path d="M25 12 C60 0 120 0 140 10 L140 100 C110 104 100 80 80 84 C50 86 40 60 30 40 Z" fill="#fff"/></g>
<g font-size="13" font-weight="700" fill="#fff" text-anchor="middle" font-family="Liberation Sans, sans-serif"><text x="93" y="41.800" textLength="81" lengthAdjust="spacingAndGlyphs">CULTIVATING</text><text x="93" y="51.400" textLength="67" lengthAdjust="spacingAndGlyphs">POSITIVITY</text><text x="93" y="61.400" textLength="81" lengthAdjust="spacingAndGlyphs">IN  EVERYDAY</text><text x="93" y="71.200" textLength="26" lengthAdjust="spacingAndGlyphs">LIFE</text></g></svg><div class="dup"><svg width="30" height="30" viewBox="0 0 30 30" style="position:absolute;left:0;top:0"><rect x="11.400" y="8.200" width="10.800" height="10.800" rx="3.200" fill="#c4c4c4" stroke="#3a3a3a" stroke-width="1.700"/><rect x="8.400" y="11" width="10.800" height="10.800" rx="3.200" fill="#fff" stroke="#3a3a3a" stroke-width="1.800"/></svg></div></div>
<div class="tp" style="left:37px;top:553px;width:186px;height:105px;"><svg width="186" height="105" preserveAspectRatio="none" viewBox="0 0 186 104.6" style="position:absolute;left:0;top:0;display:block"><defs><filter id="b5"><feGaussianBlur stdDeviation="1.100"/></filter><clipPath id="p5"><rect x="7.600" y="14" width="53.300" height="71.600"/></clipPath></defs>
<rect width="186" height="104.600" fill="#e27cb6"/>
<rect x="34" y="0" width="34.800" height="104.600" fill="#dadada"/>
<path d="M2 6.800 h24" stroke="#f3c3dd" stroke-width="0.600"/>
<g clip-path="url(#p5)"><rect x="7.600" y="14" width="53.300" height="71.600" fill="#bcbcb8"/><g filter="url(#b5)"><rect x="46" y="14" width="15" height="72" fill="#c6c6c2"/><path d="M14 52 L20 44 L27 47 L30 44 C32 41 42 41 44 44 L47 47 L52 44 L58 52 L54 56 L47 52 L46 70 L47 86 H27 L28 70 L27 52 L18 56 Z" fill="#a3a39e"/><ellipse cx="34.300" cy="29" rx="6.200" ry="8" fill="#a9a59f"/><ellipse cx="34.300" cy="22" rx="6" ry="4.500" fill="#6e6a66"/><circle cx="34.300" cy="17.500" r="2.600" fill="#625e5a"/><ellipse cx="20" cy="41" rx="7" ry="4.200" transform="rotate(-15 20 41)" fill="#85837f"/><ellipse cx="48" cy="41" rx="5.500" ry="4.200" transform="rotate(15 48 41)" fill="#85837f"/><rect x="28" y="66" width="18" height="4" fill="#c2b8b0"/><path d="M27 70 H46 L47 86 H27 Z" fill="#b2b2ac"/></g></g>
<g fill="#f4d6e6"><rect x="78.85" y="0.30" width="4.75" height="4.75"/><rect x="88.35" y="0.30" width="4.75" height="4.75"/><rect x="97.85" y="0.30" width="4.75" height="4.75"/><rect x="107.35" y="0.30" width="4.75" height="4.75"/><rect x="116.85" y="0.30" width="4.75" height="4.75"/><rect x="126.35" y="0.30" width="4.75" height="4.75"/><rect x="135.85" y="0.30" width="4.75" height="4.75"/><rect x="74.10" y="5.05" width="4.75" height="4.75"/><rect x="83.60" y="5.05" width="4.75" height="4.75"/><rect x="93.10" y="5.05" width="4.75" height="4.75"/><rect x="102.60" y="5.05" width="4.75" height="4.75"/><rect x="112.10" y="5.05" width="4.75" height="4.75"/><rect x="121.60" y="5.05" width="4.75" height="4.75"/><rect x="131.10" y="5.05" width="4.75" height="4.75"/></g> <g fill="#f4d6e6"><rect x="114.70" y="91.90" width="4.75" height="4.75"/><rect x="124.20" y="91.90" width="4.75" height="4.75"/><rect x="133.70" y="91.90" width="4.75" height="4.75"/><rect x="143.20" y="91.90" width="4.75" height="4.75"/><rect x="152.70" y="91.90" width="4.75" height="4.75"/><rect x="162.20" y="91.90" width="4.75" height="4.75"/><rect x="171.70" y="91.90" width="4.75" height="4.75"/><rect x="181.20" y="91.90" width="4.75" height="4.75"/><rect x="119.45" y="96.65" width="4.75" height="4.75"/><rect x="128.95" y="96.65" width="4.75" height="4.75"/><rect x="138.45" y="96.65" width="4.75" height="4.75"/><rect x="147.95" y="96.65" width="4.75" height="4.75"/><rect x="157.45" y="96.65" width="4.75" height="4.75"/><rect x="166.95" y="96.65" width="4.75" height="4.75"/><rect x="176.45" y="96.65" width="4.75" height="4.75"/></g>
<g transform="translate(75,50.700) scale(0.650,1)"><text x="0" y="0" font-size="15.600" font-weight="700" fill="#f6e6f0" stroke="#f6e6f0" stroke-width="0.500" font-family="Liberation Sans, sans-serif">BALANCE BETWEEN</text></g>
<g transform="translate(74.500,56) scale(1.370,1)"><text x="0" y="0" font-size="8.300" font-style="italic" fill="#2a0d30" stroke="#2a0d30" stroke-width="0.150" letter-spacing="0.200" font-family="Liberation Serif, serif">Fitness And Nutrition</text></g>
<path d="M74.800 61.500 h57" stroke="#fbeaf3" stroke-width="0.700"/>
<g transform="translate(135,65.500) scale(0.690,1)"><text x="0" y="0" font-size="9" font-weight="700" fill="#f6e6f0" font-family="Liberation Sans, sans-serif">Isabella Linton</text></g></svg><div class="dup"><svg width="30" height="30" viewBox="0 0 30 30" style="position:absolute;left:0;top:0"><rect x="11.400" y="8.200" width="10.800" height="10.800" rx="3.200" fill="#c4c4c4" stroke="#3a3a3a" stroke-width="1.700"/><rect x="8.400" y="11" width="10.800" height="10.800" rx="3.200" fill="#fff" stroke="#3a3a3a" stroke-width="1.800"/></svg></div></div>
<div class="tp" style="left:235px;top:553px;width:186px;height:105px;border-radius:5px 0 0 5px;"><svg width="186" height="105" preserveAspectRatio="none" viewBox="0 0 186 104.6" style="position:absolute;left:0;top:0;display:block"><defs><filter id="b6" x="-20%" y="-20%" width="140%" height="140%"><feGaussianBlur stdDeviation="1.600"/></filter></defs>
<rect width="186" height="104.600" fill="#0c2113"/>
<g filter="url(#b6)"><ellipse cx="30" cy="22" rx="26" ry="11" transform="rotate(-25 30 22)" fill="#1f5a2c"/><ellipse cx="20" cy="60" rx="22" ry="10" transform="rotate(40 20 60)" fill="#174a24"/><ellipse cx="62" cy="30" rx="16" ry="8" transform="rotate(30 62 30)" fill="#2a6d38"/><ellipse cx="120" cy="16" rx="22" ry="9" transform="rotate(-20 120 16)" fill="#1a4f27"/><ellipse cx="128" cy="74" rx="22" ry="10" transform="rotate(-35 128 74)" fill="#2c7a40"/><ellipse cx="70" cy="92" rx="24" ry="9" transform="rotate(15 70 92)" fill="#133f1f"/><ellipse cx="36" cy="90" rx="16" ry="8" transform="rotate(-30 36 90)" fill="#1d5a2c"/><ellipse cx="100" cy="50" rx="14" ry="8" transform="rotate(50 100 50)" fill="#102f18"/><ellipse cx="8" cy="34" rx="10" ry="18" fill="#0f3a1a"/><ellipse cx="132" cy="42" rx="10" ry="5" transform="rotate(-20 132 42)" fill="#3a8a4c"/></g>
<path d="M83.800 21 h18.600 M83.800 80 h18.600" stroke="#c98b6b" stroke-width="0.900"/>
<text x="93" y="44.200" text-anchor="middle" font-size="17.600" fill="#f1f5ee" font-family="Liberation Serif, serif">Ecology &amp;</text>
<text x="93.300" y="63" text-anchor="middle" font-size="17.400" fill="#f1f5ee" font-family="Liberation Serif, serif">Biodiversity</text>
<text x="93" y="71.500" text-anchor="middle" font-size="3.400" letter-spacing="0.500" fill="#d5ded3" font-family="Liberation Sans, sans-serif">CELEBRATING EARTH DAY</text>
<text x="93" y="92.800" text-anchor="middle" font-size="2.600" fill="#cdd6cb" font-family="Liberation Sans, sans-serif">Presented by: Daniel Gallego</text></svg><div class="dup"><svg width="30" height="30" viewBox="0 0 30 30" style="position:absolute;left:0;top:0"><rect x="11.400" y="8.200" width="10.800" height="10.800" rx="3.200" fill="#c4c4c4" stroke="#3a3a3a" stroke-width="1.700"/><rect x="8.400" y="11" width="10.800" height="10.800" rx="3.200" fill="#fff" stroke="#3a3a3a" stroke-width="1.800"/></svg></div></div>
<div class="tp" style="left:37px;top:670px;width:186px;height:105px;"><svg width="186" height="105" preserveAspectRatio="none" viewBox="0 0 186 104.6" style="position:absolute;left:0;top:0;display:block"><defs><filter id="b7"><feGaussianBlur stdDeviation="0.900"/></filter><linearGradient id="mg" x1="0" y1="0" x2="1" y2="0"><stop offset="0" stop-color="#e6e6ea"/><stop offset="0.600" stop-color="#efeff2"/><stop offset="1" stop-color="#d9d9de"/></linearGradient></defs><rect width="186" height="104.600" fill="url(#mg)"/><rect x="0.500" y="0.500" width="185" height="103.600" rx="4.500" fill="none" stroke="#cfcfd3"/>
<g filter="url(#b7)"><path d="M58 0 L72 0 L74 8 L66 10 L60 6 Z" fill="#f4f4f6"/><path d="M66 4 L74 2 L76 10 L70 13 Z" fill="#8e8e96"/><path d="M92 0 H150 L146 14 H100 Z" fill="#fbfbfc"/><path d="M100 2 L112 8 L108 14 L98 8 Z" fill="#b9b9c0"/><path d="M118 8 L132 4 L136 14 H120 Z" fill="#ffffff"/><path d="M150 0 H186 V14 H160 Z" fill="#dcdce1"/></g></svg><div class="dup"><svg width="30" height="30" viewBox="0 0 30 30" style="position:absolute;left:0;top:0"><rect x="11.400" y="8.200" width="10.800" height="10.800" rx="3.200" fill="#c4c4c4" stroke="#3a3a3a" stroke-width="1.700"/><rect x="8.400" y="11" width="10.800" height="10.800" rx="3.200" fill="#fff" stroke="#3a3a3a" stroke-width="1.800"/></svg></div></div>
<div class="tp" style="left:235px;top:670px;width:186px;height:105px;"><svg width="186" height="105" preserveAspectRatio="none" viewBox="0 0 186 104.6" style="position:absolute;left:0;top:0;display:block"><rect width="186" height="104.600" fill="#fad25c"/>
<g fill="none" stroke="#f19b2c" stroke-width="2.400" stroke-linecap="round"><path d="M5 9 l3 5 M10 8 l3 6 M15 9 l2 5 M21 10 l2 4"/><path d="M36 0 l12 10 M41 0 l10 8 M46 0 l8 6"/><path d="M66 4 l6 -2 l-2 6 l6 -1"/><path d="M106 3 c10 -3 22 -3 38 0 M108 7 c12 -3 24 -2 36 0 M112 11 c10 -2 20 -2 28 0" stroke-width="3.200"/><path d="M164 6 l2 7 M170 5 l2 8 M176 6 l2 7"/></g></svg><div class="dup"><svg width="30" height="30" viewBox="0 0 30 30" style="position:absolute;left:0;top:0"><rect x="11.400" y="8.200" width="10.800" height="10.800" rx="3.200" fill="#c4c4c4" stroke="#3a3a3a" stroke-width="1.700"/><rect x="8.400" y="11" width="10.800" height="10.800" rx="3.200" fill="#fff" stroke="#3a3a3a" stroke-width="1.800"/></svg></div></div></div><!--TPL_END-->
<div class="abs" style="left:458px;top:0;width:22px;height:857px;background:#fff"></div>
<div class="tri" style="left:462px;top:7px;border-left:7.500px solid transparent;border-right:7.500px solid transparent;border-bottom:10px solid #8f8f8f"></div>
<div class="tri" style="left:462px;top:842px;border-left:7.500px solid transparent;border-right:7.500px solid transparent;border-top:10px solid #8f8f8f"></div>
</div>

<!-- CANVAS TOOLBAR -->
<!--CT_START--><div id="ctool">
<svg class="abs" style="left:34.0px;top:20.5px" width="29" height="28" viewBox="0 0 29 28" fill="none" stroke="#1f1f1f" stroke-width="2.700" stroke-linecap="round" stroke-linejoin="round"><rect x="2.600" y="2.800" width="23.800" height="22.400" rx="6"/><path d="M14 8 H22 V16 Z" fill="#1f1f1f" stroke-width="1.600"/><path d="M21 9 L15.500 15" stroke-width="2.600"/><g fill="#1f1f1f" stroke="none"><circle cx="5.600" cy="14.800" r="1.350"/><circle cx="10.200" cy="14.800" r="1.350"/><circle cx="13" cy="18.200" r="1.350"/><circle cx="13" cy="22.300" r="1.350"/></g></svg>
<svg class="abs" style="left:94.0px;top:20.5px" width="29" height="30" viewBox="0 0 29 30" fill="none" stroke="#1f1f1f" stroke-width="2.700" stroke-linecap="round" stroke-linejoin="round"><path d="M14.500 2.900 C21 2.900 25.800 7 25.800 12.200 C25.800 15.500 23.800 16.800 21.800 17.200 C20.200 17.600 19.800 19.200 21 20.200 C22.400 21.200 24.600 20.600 25.200 22 C25.800 24 21 27 15.200 27 C8 27 2.800 21.800 2.800 15 C2.800 8.200 8 2.900 14.500 2.900 Z"/><g fill="#1f1f1f" stroke="none"><circle cx="9" cy="11.200" r="1.900"/><circle cx="15.200" cy="8" r="1.900"/><circle cx="9" cy="18.700" r="1.900"/><circle cx="15.200" cy="21.500" r="1.900"/></g></svg>
<svg class="abs" style="left:154.0px;top:21.0px" width="30" height="29" viewBox="0 0 30 29" fill="none" stroke="#1f1f1f" stroke-width="2.700" stroke-linecap="round" stroke-linejoin="round"><circle cx="19.600" cy="19.400" r="6.900"/><path d="M13.300 9.800 A4.600 4.600 0 0 0 9.200 17.700"/><path d="M8.300 2.800 A3.300 3.300 0 0 0 2.600 7.700"/></svg>
<div class="abs" style="left:215.0px;top:22.0px;width:26.700px;height:26.300px;border-radius:7.500px;border:3px solid #858585;background:#fdf5f9"></div>
<svg class="abs" style="left:274.0px;top:20.5px" width="29" height="30" viewBox="0 0 29 30" fill="none" stroke="#1f1f1f" stroke-width="2.700" stroke-linecap="round" stroke-linejoin="round"><rect x="2.700" y="2.900" width="23.600" height="23.600" rx="7.500" stroke-width="2.900"/><rect x="7" y="7.800" width="15" height="14.600" rx="4" fill="#1f1f1f" stroke="none"/><path d="M9.500 14.800 L9.500 10.500 L19.500 10.500 L19.500 18.800 L13 13.600 Z" fill="#fff" stroke="#fff" stroke-width="0.800"/><circle cx="16.800" cy="13" r="1.250" fill="#1f1f1f" stroke="none"/></svg>
<svg class="abs" style="left:335.0px;top:20.5px" width="29" height="30" viewBox="0 0 29 30" fill="none" stroke="#1f1f1f" stroke-width="2.700" stroke-linecap="round" stroke-linejoin="round"><path d="M2.800 16.500 V7.500 a5 5 0 0 1 5-5 H14"/><path d="M7 21.500 V12 a5 5 0 0 1 5-5 H18"/><path d="M15.500 11 H21.500 L26.700 16.200 V23 a4.300 4.300 0 0 1-4.300 4.300 H15.500 a4.300 4.300 0 0 1-4.300-4.300 V15.300 a4.300 4.300 0 0 1 4.300-4.300 Z" stroke-width="2.900"/><path d="M21 12 V15.300 a1.400 1.400 0 0 0 1.400 1.400 H25.500" stroke-width="2.200"/></svg>
<svg class="abs" style="left:395.0px;top:22.0px" width="28" height="27" viewBox="0 0 28 27" fill="none" stroke="#1f1f1f" stroke-width="2.700" stroke-linecap="round" stroke-linejoin="round"><path d="M2.500 4.300 H15.200 M5.200 8.800 L14.800 20.500 M12.200 5.500 C11.500 11 8 15 2.800 17.600" stroke-width="2.600"/><path d="M13.600 24.600 L19.400 11.200 L25.200 24.400 M15.500 20.500 H23.500" stroke-width="2.800"/></svg>
<div class="abs" style="left:1168.5px;top:23.0px;font-size:20px;line-height:24px;color:#222;letter-spacing:0.100px">25%</div>
<svg class="abs" style="left:1229.5px;top:29.5px" width="17" height="11.500" viewBox="0 0 17 11.500" fill="none" stroke="#111" stroke-width="2.600" stroke-linecap="round" stroke-linejoin="round"><path d="M2.500 3 L8.500 8.700 L14.500 3"/></svg>
</div><!--CT_END-->

<!-- CANVAS -->
<!--CV_START--><div id="canvas">
<div class="abs" style="left:0;top:0;width:40px;height:627px;background:linear-gradient(90deg,#dadada,#e6e6e6)"></div>
<div class="abs" style="left:0;top:0;width:1309px;height:5px;background:linear-gradient(180deg,#dedede,#e6e6e6)"></div>
<div class="abs" style="left:0;bottom:0;width:1309px;height:28px;background:linear-gradient(180deg,rgba(214,214,214,0),#d8d8d8)"></div>
<div class="abs" style="left:297.3px;top:66.0px;font-size:18.300px;line-height:22px;white-space:nowrap;letter-spacing:-0.650px"><span style="font-weight:700;color:#1f1f1f">Page 1 -</span><span style="color:#8e8e8e;letter-spacing:0.800px;margin-left:5.800px">Add title</span></div>
<div class="abs" style="left:297.0px;top:112.5px;width:715.500px;height:403px;background-color:#fdf8fb;background-image:linear-gradient(90deg,#f9f3f6 0.900px,transparent 0.900px),linear-gradient(180deg,#f9f3f6 0.900px,transparent 0.900px);background-size:9.350px 9.350px;background-position:3px 4px;overflow:hidden">
<div class="abs" style="left:0;top:32.700px;width:60.600px;height:336.500px;background:#ea5424"></div>
<svg class="abs" style="left:614px;top:30px" width="72" height="72" viewBox="0 0 72 72"><path d="M4.500 2.800 H69 V67.500 H60.400 V17.600 L8.800 69 L2.800 63 L54.500 11.300 H4.500 Z" fill="#ea5424"/></svg>
<div class="abs" style="left:141.500px;top:160.500px;font-family:'Liberation Mono',monospace;font-size:47.150px;line-height:56px;color:#1d1d1d;white-space:nowrap;-webkit-text-stroke:1.500px #1d1d1d;transform-origin:0 82%;transform:scaleY(1.030)">Sarah L.Jones</div>
<div class="abs" style="left:142px;top:220.500px;font-family:'Liberation Mono',monospace;font-size:22.420px;line-height:28px;color:#1d1d1d;white-space:nowrap;-webkit-text-stroke:0.250px #1d1d1d">Creative Portfolio</div>
</div>
<div class="abs" style="left:1182.3px;top:131.0px;width:86.300px;height:20px;border:3px solid #b0b0b0;border-radius:0 0 9px 9px;background:#d6d6d6"></div>
<div class="abs" style="left:1177.2px;top:43.0px;width:95.700px;height:95px;border:3px solid #b0b0b0;border-radius:9px;background:#d6d6d6"></div>
<div class="abs" style="left:1201.0px;top:66.7px;width:48px;height:48px;border-radius:50%;background:#fff"></div>
<svg class="abs" style="left:1210.0px;top:76.0px" width="32" height="30" viewBox="0 0 32 30" fill="none" stroke="#111" stroke-width="2.600" stroke-linecap="round" stroke-linejoin="round"><path d="M6.300 4.500 V12.800 M6.300 17.200 V25.500 M2.800 7.500 L6.300 3.700 L9.800 7.500 M2.800 22.500 L6.300 26.300 L9.800 22.500" stroke-width="2.800"/><path d="M20 14.500 l7.200 3.600 a1.600 1.600 0 0 1 0 2.900 l-5.600 3.600 a3 3 0 0 1-3.200 0 l-5.600-3.600 a1.600 1.600 0 0 1 0-2.900 Z" fill="#ababab"/><path d="M18.400 4 a3 3 0 0 1 3.200 0 l5.600 3.600 a1.600 1.600 0 0 1 0 2.900 l-5.600 3.600 a3 3 0 0 1-3.200 0 l-5.600-3.600 a1.600 1.600 0 0 1 0-2.900 Z" fill="#fff"/></svg>
<div class="abs" style="left:1165.3px;top:548.9px;width:48px;height:48px;border-radius:50%;background:#fff;box-shadow:0 2px 8px rgba(0,0,0,.12)"></div>
<div class="abs" style="left:1224.6px;top:548.9px;width:48px;height:48px;border-radius:50%;background:#fff;box-shadow:0 2px 8px rgba(0,0,0,.12)"></div>
<svg class="abs" style="left:1175.0px;top:559.4px" width="29" height="29" viewBox="0 0 29 29" fill="none" stroke="#1a1a1a" stroke-width="2.600" stroke-linejoin="round"><rect x="2.600" y="2.600" width="9.200" height="9.200" rx="2.200"/><rect x="17" y="2.600" width="9.200" height="9.200" rx="2.200"/><rect x="2.600" y="17" width="9.200" height="9.200" rx="2.200"/><rect x="17" y="17" width="9.200" height="9.200" rx="2.200"/></svg>
<svg class="abs" style="left:1239.2px;top:567.3px" width="17" height="11.500" viewBox="0 0 17 11.500" fill="none" stroke="#111" stroke-width="2.600" stroke-linecap="round" stroke-linejoin="round"><path d="M2.500 3 L8.500 8.700 L14.500 3"/></svg>
</div><!--CV_END-->

<!-- STRIP -->
<!--ST_START--><div id="strip">
<div class="abs" style="left:0;top:0;width:1177px;height:155px;overflow:hidden">
<div class="abs" style="left:269.2px;top:24.0px;width:170.300px;height:95.500px;border-radius:11px;background:#e5e5e5"></div><div class="abs" style="left:272.0px;top:26.8px;width:164.800px;height:90px;border-radius:8.500px;overflow:hidden;background-color:#fdf9fb;background-image:linear-gradient(90deg,#f8f2f5 0.700px,transparent 0.700px);background-size:8.600px 100%"><div class="abs" style="left:0;top:6.300px;width:13.800px;height:77px;background:#ea5424"></div><svg class="abs" style="left:146.500px;top:8px" width="10" height="10" viewBox="0 0 10 10" fill="none" stroke="#ea5424" stroke-width="1.100"><path d="M1 9 L8.800 1.200 M1.500 1.200 H8.800 V8.500"/></svg><div class="abs" style="left:28.5px;top:25.0px;font-family:'Liberation Mono',monospace;font-size:8.85px;line-height:10.85px;font-weight:700;color:#1d1d1d;white-space:nowrap">A little about me</div><div class="abs" style="left:28.5px;top:35.7px;width:84.5px;height:2px;background:repeating-linear-gradient(90deg,#333 0,#333 2.300px,transparent 2.300px,transparent 3.100px);opacity:.42"></div><div class="abs" style="left:28.5px;top:39.3px;width:61.4px;height:2px;background:repeating-linear-gradient(90deg,#333 0,#333 2.300px,transparent 2.300px,transparent 3.100px);opacity:.42"></div><div class="abs" style="left:28.5px;top:49.5px;width:87.2px;height:1.5px;background:repeating-linear-gradient(90deg,#666 0,#666 2.300px,transparent 2.300px,transparent 3.100px);opacity:.42"></div><div class="abs" style="left:28.5px;top:52.2px;width:87.2px;height:1.5px;background:repeating-linear-gradient(90deg,#666 0,#666 2.300px,transparent 2.300px,transparent 3.100px);opacity:.42"></div><div class="abs" style="left:28.5px;top:55.0px;width:87.2px;height:1.5px;background:repeating-linear-gradient(90deg,#666 0,#666 2.300px,transparent 2.300px,transparent 3.100px);opacity:.42"></div><div class="abs" style="left:28.5px;top:57.6px;width:87.2px;height:1.5px;background:repeating-linear-gradient(90deg,#666 0,#666 2.300px,transparent 2.300px,transparent 3.100px);opacity:.42"></div><div class="abs" style="left:28.5px;top:59.9px;width:38.0px;height:1.5px;background:repeating-linear-gradient(90deg,#666 0,#666 2.300px,transparent 2.300px,transparent 3.100px);opacity:.42"></div><div class="abs" style="left:6.500px;top:60px;width:20px;height:23.500px;border-radius:5.500px;background:#fff;text-align:center;font-size:16.500px;line-height:25.500px;font-weight:700;color:#222;box-shadow:0 0 2px rgba(0,0,0,.06)">2</div></div>
<div class="abs" style="left:458.2px;top:24.0px;width:170.300px;height:95.500px;border-radius:11px;background:#e5e5e5"></div><div class="abs" style="left:461.0px;top:26.8px;width:164.800px;height:90px;border-radius:8.500px;overflow:hidden;background-color:#fdf9fb;background-image:linear-gradient(90deg,#f8f2f5 0.700px,transparent 0.700px);background-size:8.600px 100%"><div class="abs" style="left:0;top:6.300px;width:13.800px;height:77px;background:#ea5424"></div><svg class="abs" style="left:146.500px;top:8px" width="10" height="10" viewBox="0 0 10 10" fill="none" stroke="#ea5424" stroke-width="1.100"><path d="M1 9 L8.800 1.200 M1.500 1.200 H8.800 V8.500"/></svg><div class="abs" style="left:28.3px;top:25.6px;font-family:'Liberation Mono',monospace;font-size:8.85px;line-height:10.85px;font-weight:700;color:#1d1d1d;white-space:nowrap">About my work</div><div class="abs" style="left:28.3px;top:35.7px;width:54.9px;height:2px;background:repeating-linear-gradient(90deg,#333 0,#333 2.300px,transparent 2.300px,transparent 3.100px);opacity:.42"></div><div class="abs" style="left:28.3px;top:39.8px;width:38.4px;height:2px;background:repeating-linear-gradient(90deg,#333 0,#333 2.300px,transparent 2.300px,transparent 3.100px);opacity:.42"></div><div class="abs" style="left:28.3px;top:49.2px;width:66.9px;height:1.6px;background:repeating-linear-gradient(90deg,#555 0,#555 2.300px,transparent 2.300px,transparent 3.100px);opacity:.42"></div><div class="abs" style="left:28.3px;top:51.8px;width:66.9px;height:1.6px;background:repeating-linear-gradient(90deg,#555 0,#555 2.300px,transparent 2.300px,transparent 3.100px);opacity:.42"></div><div class="abs" style="left:28.3px;top:54.5px;width:66.9px;height:1.6px;background:repeating-linear-gradient(90deg,#555 0,#555 2.300px,transparent 2.300px,transparent 3.100px);opacity:.42"></div><div class="abs" style="left:28.3px;top:57.3px;width:66.9px;height:1.6px;background:repeating-linear-gradient(90deg,#555 0,#555 2.300px,transparent 2.300px,transparent 3.100px);opacity:.42"></div><div class="abs" style="left:28.3px;top:62.2px;width:65.2px;height:1.5px;background:repeating-linear-gradient(90deg,#666 0,#666 2.300px,transparent 2.300px,transparent 3.100px);opacity:.42"></div><div class="abs" style="left:28.3px;top:65.0px;width:63.2px;height:1.5px;background:repeating-linear-gradient(90deg,#666 0,#666 2.300px,transparent 2.300px,transparent 3.100px);opacity:.42"></div><div class="abs" style="left:28.3px;top:67.6px;width:22.6px;height:1.5px;background:repeating-linear-gradient(90deg,#666 0,#666 2.300px,transparent 2.300px,transparent 3.100px);opacity:.42"></div><svg class="abs" style="left:107.500px;top:24px" width="36.200" height="46.800" viewBox="0 0 36.200 46.800"><defs><filter id="lfb"><feGaussianBlur stdDeviation="0.900"/></filter></defs><rect width="36.200" height="46.800" fill="#0a2e2c"/><g filter="url(#lfb)"><ellipse cx="9" cy="12" rx="8" ry="14" transform="rotate(-20 9 12)" fill="#148a74"/><ellipse cx="24" cy="30" rx="9" ry="16" transform="rotate(15 24 30)" fill="#12907a"/><ellipse cx="29" cy="12" rx="6" ry="12" transform="rotate(25 29 12)" fill="#0f5a5c"/><ellipse cx="6" cy="38" rx="7" ry="10" transform="rotate(-30 6 38)" fill="#0e6a5a"/><ellipse cx="17" cy="24" rx="3" ry="10" transform="rotate(10 17 24)" fill="#072220"/></g></svg><div class="abs" style="left:6.500px;top:60px;width:20px;height:23.500px;border-radius:5.500px;background:#fff;text-align:center;font-size:16.500px;line-height:25.500px;font-weight:700;color:#222;box-shadow:0 0 2px rgba(0,0,0,.06)">3</div></div>
<div class="abs" style="left:647.0px;top:24.0px;width:170.300px;height:95.500px;border-radius:11px;background:#e5e5e5"></div><div class="abs" style="left:649.8px;top:26.8px;width:164.800px;height:90px;border-radius:8.500px;overflow:hidden;background-color:#fdf9fb;background-image:linear-gradient(90deg,#f8f2f5 0.700px,transparent 0.700px);background-size:8.600px 100%"><div class="abs" style="left:0;top:6.300px;width:13.800px;height:77px;background:#ea5424"></div><svg class="abs" style="left:146.500px;top:8px" width="10" height="10" viewBox="0 0 10 10" fill="none" stroke="#ea5424" stroke-width="1.100"><path d="M1 9 L8.800 1.200 M1.500 1.200 H8.800 V8.500"/></svg><div class="abs" style="left:26.1px;top:25.5px;font-family:'Liberation Mono',monospace;font-size:8.9px;line-height:10.9px;font-weight:700;color:#1d1d1d;white-space:nowrap">Projects I've worked on</div><div class="abs" style="left:26.1px;top:36.0px;width:114.1px;height:2px;background:repeating-linear-gradient(90deg,#222 0,#222 2.300px,transparent 2.300px,transparent 3.100px);opacity:.42"></div><div class="abs" style="left:26.1px;top:43.2px;width:94.4px;height:1.6px;background:repeating-linear-gradient(90deg,#555 0,#555 2.300px,transparent 2.300px,transparent 3.100px);opacity:.42"></div><div class="abs" style="left:26.1px;top:45.8px;width:97.6px;height:1.6px;background:repeating-linear-gradient(90deg,#555 0,#555 2.300px,transparent 2.300px,transparent 3.100px);opacity:.42"></div><div class="abs" style="left:26.1px;top:48.3px;width:92.6px;height:1.6px;background:repeating-linear-gradient(90deg,#555 0,#555 2.300px,transparent 2.300px,transparent 3.100px);opacity:.42"></div><div class="abs" style="left:26.1px;top:51.1px;width:27.6px;height:1.6px;background:repeating-linear-gradient(90deg,#555 0,#555 2.300px,transparent 2.300px,transparent 3.100px);opacity:.42"></div><div class="abs" style="left:26.1px;top:58.5px;width:94.4px;height:1.5px;background:repeating-linear-gradient(90deg,#666 0,#666 2.300px,transparent 2.300px,transparent 3.100px);opacity:.42"></div><div class="abs" style="left:26.1px;top:61.2px;width:88.6px;height:1.5px;background:repeating-linear-gradient(90deg,#666 0,#666 2.300px,transparent 2.300px,transparent 3.100px);opacity:.42"></div><div class="abs" style="left:26.1px;top:64.0px;width:32.6px;height:1.5px;background:repeating-linear-gradient(90deg,#666 0,#666 2.300px,transparent 2.300px,transparent 3.100px);opacity:.42"></div><div class="abs" style="left:26.1px;top:72.5px;width:105.6px;height:1.5px;background:repeating-linear-gradient(90deg,#666 0,#666 2.300px,transparent 2.300px,transparent 3.100px);opacity:.42"></div><div class="abs" style="left:6.500px;top:60px;width:20px;height:23.500px;border-radius:5.500px;background:#fff;text-align:center;font-size:16.500px;line-height:25.500px;font-weight:700;color:#222;box-shadow:0 0 2px rgba(0,0,0,.06)">4</div></div>
<div class="abs" style="left:836.1px;top:24.0px;width:170.300px;height:95.500px;border-radius:11px;background:#e5e5e5"></div><div class="abs" style="left:838.9px;top:26.8px;width:164.800px;height:90px;border-radius:8.500px;overflow:hidden;background-color:#fdf9fb;background-image:linear-gradient(90deg,#f8f2f5 0.700px,transparent 0.700px);background-size:8.600px 100%"><div class="abs" style="left:0;top:6.300px;width:13.800px;height:77px;background:#ea5424"></div><svg class="abs" style="left:146.500px;top:8px" width="10" height="10" viewBox="0 0 10 10" fill="none" stroke="#ea5424" stroke-width="1.100"><path d="M1 9 L8.800 1.200 M1.500 1.200 H8.800 V8.500"/></svg><div class="abs" style="left:26.0px;top:24.4px;font-family:'Liberation Mono',monospace;font-size:8.9px;line-height:10.9px;font-weight:700;color:#1d1d1d;white-space:nowrap">Projects I've worked on</div><div class="abs" style="left:26.8px;top:40.3px;width:22.5px;height:30.300px;background:linear-gradient(180deg,#8a8f6a 0,#6e5a48 30%,#3a2a26 60%,#5a3a32 100%)"></div><div class="abs" style="left:27.8px;top:73.2px;width:20.5px;height:1.2px;background:repeating-linear-gradient(90deg,#777 0,#777 2.300px,transparent 2.300px,transparent 3.100px);opacity:.42"></div><div class="abs" style="left:27.8px;top:75.4px;width:15.5px;height:1.2px;background:repeating-linear-gradient(90deg,#777 0,#777 2.300px,transparent 2.300px,transparent 3.100px);opacity:.42"></div><div class="abs" style="left:57.4px;top:40.3px;width:24.1px;height:30.300px;background:linear-gradient(180deg,#4f94d6 0,#7ab0e0 35%,#d8c23a 55%,#7aa52c 80%,#5c8a22 100%)"></div><div class="abs" style="left:58.4px;top:73.2px;width:22.1px;height:1.2px;background:repeating-linear-gradient(90deg,#777 0,#777 2.300px,transparent 2.300px,transparent 3.100px);opacity:.42"></div><div class="abs" style="left:58.4px;top:75.4px;width:17.1px;height:1.2px;background:repeating-linear-gradient(90deg,#777 0,#777 2.300px,transparent 2.300px,transparent 3.100px);opacity:.42"></div><div class="abs" style="left:90.4px;top:40.3px;width:23.3px;height:30.300px;background:linear-gradient(160deg,#e0a828 0,#d89a2a 35%,#3a8a8a 60%,#d8b048 100%)"></div><div class="abs" style="left:91.4px;top:73.2px;width:21.3px;height:1.2px;background:repeating-linear-gradient(90deg,#777 0,#777 2.300px,transparent 2.300px,transparent 3.100px);opacity:.42"></div><div class="abs" style="left:91.4px;top:75.4px;width:16.3px;height:1.2px;background:repeating-linear-gradient(90deg,#777 0,#777 2.300px,transparent 2.300px,transparent 3.100px);opacity:.42"></div><div class="abs" style="left:123.8px;top:40.3px;width:23.5px;height:30.300px;background:linear-gradient(170deg,#8a6a78 0,#c8d4e4 30%,#a8c0dc 60%,#dfe8f2 100%)"></div><div class="abs" style="left:124.8px;top:73.2px;width:21.5px;height:1.2px;background:repeating-linear-gradient(90deg,#777 0,#777 2.300px,transparent 2.300px,transparent 3.100px);opacity:.42"></div><div class="abs" style="left:124.8px;top:75.4px;width:16.5px;height:1.2px;background:repeating-linear-gradient(90deg,#777 0,#777 2.300px,transparent 2.300px,transparent 3.100px);opacity:.42"></div><div class="abs" style="left:6.500px;top:60px;width:20px;height:23.500px;border-radius:5.500px;background:#fff;text-align:center;font-size:16.500px;line-height:25.500px;font-weight:700;color:#222;box-shadow:0 0 2px rgba(0,0,0,.06)">5</div></div>
<div class="abs" style="left:1025.2px;top:24.0px;width:170.300px;height:95.500px;border-radius:11px;background:#e5e5e5"></div><div class="abs" style="left:1028.0px;top:26.8px;width:164.800px;height:90px;border-radius:8.500px;overflow:hidden;background-color:#fdf9fb;background-image:linear-gradient(90deg,#f8f2f5 0.700px,transparent 0.700px);background-size:8.600px 100%"><div class="abs" style="left:0;top:6.300px;width:13.800px;height:77px;background:#ea5424"></div><svg class="abs" style="left:141px;top:6.500px" width="17" height="17" viewBox="0 0 17 17" fill="none" stroke="#ea5424" stroke-width="1.900"><path d="M1 16 L15.500 1.500 M2 1.500 H15.500 V15"/></svg><div class="abs" style="left:32.2px;top:28.5px;font-family:'Liberation Mono',monospace;font-size:8.85px;line-height:10.85px;font-weight:700;color:#1d1d1d;white-space:nowrap">Find out more</div><div class="abs" style="left:32.2px;top:39.5px;width:92.6px;height:1.6px;background:repeating-linear-gradient(90deg,#444 0,#444 2.300px,transparent 2.300px,transparent 3.100px);opacity:.42"></div><div class="abs" style="left:32.2px;top:42.7px;width:85.3px;height:1.6px;background:repeating-linear-gradient(90deg,#444 0,#444 2.300px,transparent 2.300px,transparent 3.100px);opacity:.42"></div><div class="abs" style="left:32.2px;top:66.9px;width:48.3px;height:2px;background:repeating-linear-gradient(90deg,#111 0,#111 2.300px,transparent 2.300px,transparent 3.100px);opacity:.42"></div><div class="abs" style="left:6.500px;top:60px;width:20px;height:23.500px;border-radius:5.500px;background:#fff;text-align:center;font-size:16.500px;line-height:25.500px;font-weight:700;color:#222;box-shadow:0 0 2px rgba(0,0,0,.06)">6</div></div>
</div>
<div class="abs" style="left:1194.7px;top:24.0px;width:96.200px;height:95.800px;border-radius:11px;background:#e6e6e6"></div>
<svg class="abs" style="left:1234.0px;top:50.0px" width="18" height="18" viewBox="0 0 18 18" stroke="#111" stroke-width="2.300" stroke-linecap="round"><path d="M9 1.800 V16.200 M1.800 9 H16.200"/></svg>
<div class="abs" style="left:1194.7px;top:74.0px;width:96.200px;text-align:center;font-size:16.800px;line-height:24px;color:#111;letter-spacing:-0.550px;-webkit-text-stroke:0.250px #111">Page</div>
<div class="abs" style="left:79.0px;top:135.0px;width:1098px;height:20px;background:#fafafa"></div>
<div class="tri" style="left:86.0px;top:138.0px;border-top:7.400px solid transparent;border-bottom:7.400px solid transparent;border-right:11px solid #8f8f8f"></div>
<div class="sb" style="left:107.0px;top:138.2px;width:1025px;height:12.600px;border-radius:6.300px"></div>
<div class="tri" style="left:1160.0px;top:137.5px;border-top:7.400px solid transparent;border-bottom:7.400px solid transparent;border-left:11px solid #8f8f8f"></div>
</div><!--ST_END-->

<!-- POPOVER -->
<!--POP_START--><div id="pop">
<div class="abs" style="left:29.6px;top:33.4px;font-size:15.5px;line-height:20px;letter-spacing:-0.22px;color:#111;white-space:nowrap;-webkit-text-stroke:0.200px #111;font-weight:700;">Filters</div>
<div class="abs" style="left:279.0px;top:31.9px;font-size:18.5px;line-height:24px;letter-spacing:0.54px;color:#5258e4;white-space:nowrap;-webkit-text-stroke:0.200px #5258e4;-webkit-text-stroke:0.35px #5258e4;">Clear (4)</div>
<div class="abs" style="left:29.3px;top:90.1px;font-size:18.7px;line-height:24px;letter-spacing:-0.00px;color:#222;white-space:nowrap;-webkit-text-stroke:0.200px #222;">Price</div>
<div class="abs" style="left:69.3px;top:138.9px;font-size:19.3px;line-height:25px;letter-spacing:0.00px;color:#222;white-space:nowrap;-webkit-text-stroke:0.200px #222;">All</div>
<div class="abs" style="left:69.3px;top:178.4px;font-size:19.3px;line-height:25px;letter-spacing:-0.80px;color:#222;white-space:nowrap;-webkit-text-stroke:0.200px #222;">Free</div>
<div class="abs" style="left:69.3px;top:217.9px;font-size:19.3px;line-height:25px;letter-spacing:0.11px;color:#222;white-space:nowrap;-webkit-text-stroke:0.200px #222;">Premium</div>
<div class="abs" style="left:29.3px;top:283.2px;font-size:18.7px;line-height:24px;letter-spacing:0.98px;color:#222;white-space:nowrap;-webkit-text-stroke:0.200px #222;">Output</div>
<div class="abs" style="left:29.3px;top:345.9px;font-size:18.7px;line-height:24px;letter-spacing:-0.24px;color:#222;white-space:nowrap;-webkit-text-stroke:0.200px #222;">Size</div>
<div class="abs" style="left:29.5px;top:408.8px;font-size:18.7px;line-height:24px;letter-spacing:0.36px;color:#222;white-space:nowrap;-webkit-text-stroke:0.200px #222;">Type</div>
<div class="abs" style="left:69.0px;top:458.4px;font-size:19px;line-height:25px;letter-spacing:0.28px;color:#222;white-space:nowrap;-webkit-text-stroke:0.200px #222;">Animated templates</div>
<div class="abs" style="left:68.6px;top:494.3px;font-size:19px;line-height:25px;letter-spacing:0.25px;color:#222;white-space:nowrap;-webkit-text-stroke:0.200px #222;">Multiple pages</div>
<div class="abs" style="left:69.3px;top:530.5px;font-size:19px;line-height:25px;letter-spacing:0.17px;color:#222;white-space:nowrap;-webkit-text-stroke:0.200px #222;">Video templates</div>
<div class="abs" style="left:68.8px;top:566.5px;font-size:19px;line-height:25px;letter-spacing:0.05px;color:#222;white-space:nowrap;-webkit-text-stroke:0.200px #222;">Static templates</div>
<div class="abs" style="left:29.3px;top:640.0px;font-size:18.7px;line-height:24px;letter-spacing:0.29px;color:#8a8a8a;white-space:nowrap;-webkit-text-stroke:0.200px #8a8a8a;">Style</div>
<svg class="abs" style="left:322.0px;top:95.2px" width="17" height="11.500" viewBox="0 0 17 11.500" fill="none" stroke="#111" stroke-width="2.600" stroke-linecap="round" stroke-linejoin="round"><path d="M2.500 8.500 L8.500 2.800 L14.500 8.500"/></svg>
<svg class="abs" style="left:322.0px;top:288.2px" width="17" height="11.500" viewBox="0 0 17 11.500" fill="none" stroke="#111" stroke-width="2.600" stroke-linecap="round" stroke-linejoin="round"><path d="M2.500 3 L8.500 8.700 L14.500 3"/></svg>
<svg class="abs" style="left:322.0px;top:350.8px" width="17" height="11.500" viewBox="0 0 17 11.500" fill="none" stroke="#111" stroke-width="2.600" stroke-linecap="round" stroke-linejoin="round"><path d="M2.500 3 L8.500 8.700 L14.500 3"/></svg>
<svg class="abs" style="left:322.0px;top:414.2px" width="17" height="11.500" viewBox="0 0 17 11.500" fill="none" stroke="#111" stroke-width="2.600" stroke-linecap="round" stroke-linejoin="round"><path d="M2.500 8.500 L8.500 2.800 L14.500 8.500"/></svg>
<svg class="abs" style="left:322.0px;top:644.8px" width="17" height="11.500" viewBox="0 0 17 11.500" fill="none" stroke="#444" stroke-width="2.600" stroke-linecap="round" stroke-linejoin="round"><path d="M2.500 3 L8.500 8.700 L14.500 3"/></svg>
<div class="dv" style="left:30px;top:262.0px"></div>
<div class="dv" style="left:30px;top:324.8px"></div>
<div class="dv" style="left:30px;top:387.5px"></div>
<div class="dv" style="left:30px;top:618.7px"></div>
<div class="abs" style="left:30px;top:137.8px;width:24px;height:24px;border-radius:50%;border:3.200px solid #222;background:#fff"></div>
<div class="abs" style="left:30px;top:176.7px;width:24px;height:24px;border-radius:50%;background:#222"><div class="abs" style="left:9.200px;top:9.200px;width:5.600px;height:5.600px;border-radius:50%;background:#fff"></div></div>
<div class="abs" style="left:30px;top:217.1px;width:24px;height:24px;border-radius:50%;border:3.200px solid #222;background:#fff"></div>
<div class="abs" style="left:30px;top:460.0px;width:24px;height:24px;border-radius:5px;border:3px solid #222;background:#fff"></div>
<div class="abs" style="left:30px;top:496.0px;width:24px;height:24px;border-radius:5px;background:#222"><svg width="24" height="24" viewBox="0 0 24 24" fill="none" stroke="#fff" stroke-width="2.800" stroke-linecap="round" stroke-linejoin="round" style="position:absolute;left:0;top:0"><path d="M6 12.500 L10.300 17 L18 7.500"/></svg></div>
<div class="abs" style="left:30px;top:532.0px;width:24px;height:24px;border-radius:5px;border:3px solid #222;background:#fff"></div>
<div class="abs" style="left:30px;top:568.0px;width:24px;height:24px;border-radius:5px;border:3px solid #222;background:#fff"></div>
<div class="abs" style="left:313.7px;top:215px;width:30px;height:30px;border-radius:50%;background:#fff;box-shadow:0 0 4px rgba(0,0,0,.13)"></div>
<svg class="abs" style="left:318.2px;top:221.5px" width="21" height="17" viewBox="0 0 21 17"><defs><linearGradient id="cg" x1="0" y1="0" x2="1" y2="1"><stop offset="0" stop-color="#e8356c"/><stop offset="0.5" stop-color="#c040a8"/><stop offset="1" stop-color="#6a55d8"/></linearGradient></defs><path d="M1 2.800 L6 7.500 L10.500 0.800 L15 7.500 L20 2.800 L18.300 14.500 a1.500 1.500 0 0 1-1.500 1.300 H4.200 a1.500 1.500 0 0 1-1.500-1.300 Z" fill="url(#cg)"/></svg>
<div class="tri" style="left:366.3px;top:81.5px;border-left:7.400px solid transparent;border-right:7.400px solid transparent;border-bottom:9.500px solid #8f8f8f"></div>
<div class="sb" style="left:367.2px;top:103px;width:13px;height:281px;border-radius:6.500px"></div>
<div class="tri" style="left:366.3px;top:655.8px;border-left:7.400px solid transparent;border-right:7.400px solid transparent;border-top:10px solid #8f8f8f"></div>
</div><!--POP_END-->

</body></html>
